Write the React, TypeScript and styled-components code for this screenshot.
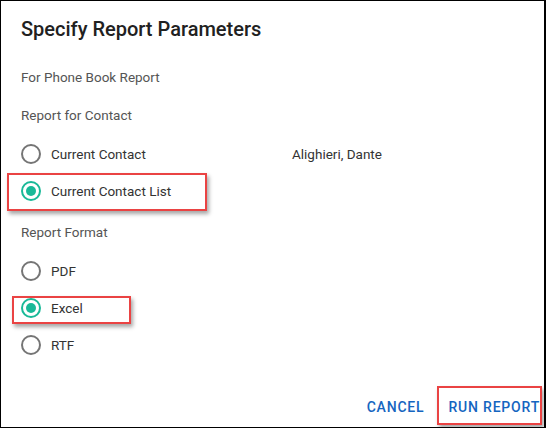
import React from 'react';
import styled, { createGlobalStyle } from 'styled-components';

const GlobalStyle = createGlobalStyle`
  html, body {
    margin: 0;
    padding: 0;
    background: #fff;
  }
  body {
    font-family: Roboto, 'Liberation Sans', sans-serif;
  }
`;

type Option = { label: string; checked?: boolean; note?: string };

const contactOptions: Option[] = [
  { label: 'Current Contact', note: 'Alighieri, Dante' },
  { label: 'Current Contact List', checked: true },
];

const formatOptions: Option[] = [
  { label: 'PDF' },
  { label: 'Excel', checked: true },
  { label: 'RTF' },
];

const RadioRow = ({ label, checked, note }: Option) => (
  <Row>
    <Choice>
      <Circle $checked={!!checked} />
      <RowLabel>{label}</RowLabel>
    </Choice>
    {note && <Note>{note}</Note>}
  </Row>
);

export const App = () => {
  return (
    <>
      <GlobalStyle />
      <Dialog>
        <Title>Specify Report Parameters</Title>

        <Content>
          <Caption>For Phone Book Report</Caption>
          <SectionLabel>Report for Contact</SectionLabel>
          <Group>
            {contactOptions.map((o) => (
              <RadioRow key={o.label} {...o} />
            ))}
          </Group>

          <FormatLabel>Report Format</FormatLabel>
          <Group>
            {formatOptions.map((o) => (
              <RadioRow key={o.label} {...o} />
            ))}
          </Group>
        </Content>

        <Footer>
          <TextButton>Cancel</TextButton>
          <TextButton>Run Report</TextButton>
        </Footer>

        <Highlight style={{ left: 6, top: 172, width: 200, height: 38 }} />
        <Highlight style={{ left: 11, top: 295, width: 119, height: 28 }} />
        <Highlight style={{ left: 436, top: 385, width: 105, height: 39 }} />
      </Dialog>
    </>
  );
};

const Dialog = styled.div`
  position: relative;
  width: 546px;
  height: 428px;
  box-sizing: border-box;
  border: 1px solid #000;
  border-right-width: 2px;
  background: #fff;
  display: flex;
  flex-direction: column;
`;

const Title = styled.h2`
  margin: 0;
  padding: 16px 20px 0;
  font-size: 20px;
  line-height: 24px;
  font-weight: 500;
  color: #212121;
`;

const Content = styled.div`
  padding: 0 20px;
  display: flex;
  flex-direction: column;
  flex: 1;
`;

const Caption = styled.div`
  margin-top: 26px;
  font-size: 13.5px;
  line-height: 20px;
  color: #555;
`;

const SectionLabel = styled(Caption)`
  margin-top: 18px;
`;

const FormatLabel = styled(Caption)`
  margin-top: 13px;
`;

const Group = styled.div`
  margin-top: 10px;
  display: flex;
  flex-direction: column;
`;

const Row = styled.div`
  height: 37px;
  display: flex;
  align-items: center;
`;

const Choice = styled.div`
  width: 271px;
  display: flex;
  align-items: center;
  gap: 10px;
`;

const Circle = styled.span<{ $checked: boolean }>`
  width: 20px;
  height: 20px;
  box-sizing: border-box;
  border-radius: 50%;
  border: 2px solid ${({ $checked }) => ($checked ? '#19b998' : '#757575')};
  display: flex;
  align-items: center;
  justify-content: center;
  &::after {
    content: '';
    width: 10px;
    height: 10px;
    border-radius: 50%;
    background: #19b998;
    display: ${({ $checked }) => ($checked ? 'block' : 'none')};
  }
`;

const RowLabel = styled.span`
  font-size: 13.5px;
  color: #333;
`;

const Note = styled.span`
  font-size: 13.5px;
  color: #333;
`;

const Footer = styled.div`
  display: flex;
  justify-content: flex-end;
  align-items: center;
  gap: 16px;
  padding: 0 0 6px;
`;

const TextButton = styled.button`
  border: none;
  background: none;
  padding: 6px 4px;
  font-family: Roboto, 'Liberation Sans', sans-serif;
  font-size: 14px;
  font-weight: 500;
  letter-spacing: 0.8px;
  text-transform: uppercase;
  color: #1565c0;
  cursor: pointer;
`;

const Highlight = styled.div`
  position: absolute;
  box-sizing: border-box;
  border: 2px solid #ea4343;
  box-shadow: 2px 3px 4px rgba(0, 0, 0, 0.35);
  pointer-events: none;
`;

export default App;
